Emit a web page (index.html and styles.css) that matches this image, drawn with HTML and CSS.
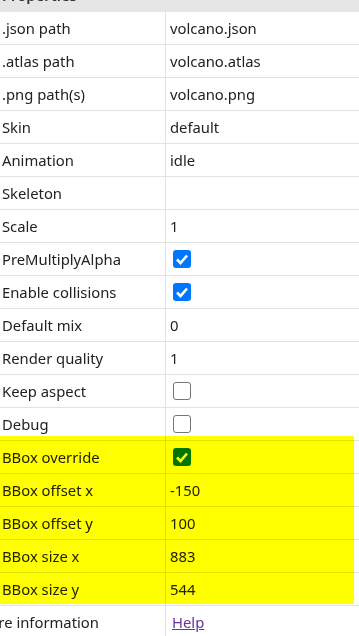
FILE: index.html
```html
<!DOCTYPE html>
<html lang="en">
<head>
  <meta charset="UTF-8" />
  <title>Properties</title>
  <link rel="stylesheet" href="styles.css">
</head>
<body>
  <div class="panel">
    <div class="props-head">Properties</div>

    <div class="row"><div class="key">.json path</div><div class="val">volcano.json</div></div>
    <div class="row"><div class="key">.atlas path</div><div class="val">volcano.atlas</div></div>
    <div class="row"><div class="key">.png path(s)</div><div class="val">volcano.png</div></div>
    <div class="row"><div class="key">Skin</div><div class="val">default</div></div>
    <div class="row"><div class="key">Animation</div><div class="val">idle</div></div>
    <div class="row"><div class="key">Skeleton</div><div class="val"></div></div>
    <div class="row"><div class="key">Scale</div><div class="val">1</div></div>
    <div class="row"><div class="key">PreMultiplyAlpha</div><div class="val"><span class="check on"></span></div></div>
    <div class="row"><div class="key">Enable collisions</div><div class="val"><span class="check on"></span></div></div>
    <div class="row"><div class="key">Default mix</div><div class="val">0</div></div>
    <div class="row"><div class="key">Render quality</div><div class="val">1</div></div>
    <div class="row"><div class="key">Keep aspect</div><div class="val"><span class="check"></span></div></div>
    <div class="row"><div class="key">Debug</div><div class="val"><span class="check"></span></div></div>
    <div class="row"><div class="key">BBox override</div><div class="val"><span class="check on"></span></div></div>
    <div class="row"><div class="key">BBox offset x</div><div class="val">-150</div></div>
    <div class="row"><div class="key">BBox offset y</div><div class="val">100</div></div>
    <div class="row"><div class="key">BBox size x</div><div class="val">883</div></div>
    <div class="row"><div class="key">BBox size y</div><div class="val">544</div></div>
    <div class="row"><div class="key more">More information</div><div class="val"><a href="#" class="help">Help</a></div></div>

    <!-- highlighted group (BBox rows) -->
    <div class="highlight"></div>
  </div>
</body>
</html>
```

FILE: styles.css
```css
html, body {
  margin: 0;
  padding: 0;
  overflow: hidden;
  background: #fff;
}

body {
  font-family: "Noto Sans", "Open Sans", sans-serif;
  font-size: 14.8px;
  color: #222;
  width: 359px;
  height: 636px;
}

.panel {
  position: relative;
  margin-top: -21px;
}

.props-head {
  height: 33px;
  line-height: 33px;
  background-color: #e6e6e6;
  padding-left: 2px;
  font-weight: 600;
  color: #333;
}

.row {
  display: flex;
  height: 33px;
  box-sizing: border-box;
  border-bottom: 1px solid #e2e2e2;
}

.key {
  width: 166px;
  box-sizing: border-box;
  border-right: 1px solid #e2e2e2;
  padding-left: 2px;
  display: flex;
  align-items: center;
  white-space: nowrap;
  overflow: hidden;
}

.key.more {
  text-indent: -26px;
}

.val {
  flex: 1;
  padding-left: 4px;
  display: flex;
  align-items: center;
}

.help {
  color: #6a2fa0;
  text-decoration: underline;
  margin-left: 2px;
}

/* checkboxes */
.check {
  width: 16px;
  height: 16px;
  margin-left: 3px;
  border: 1px solid #767676;
  border-radius: 3px;
  background: #fff;
}

.check.on {
  width: 18px;
  height: 18px;
  border: none;
  background-color: #0075ff;
  background-image: url("data:image/svg+xml;utf8,<svg xmlns='http://www.w3.org/2000/svg' viewBox='0 0 18 18'><path d='M4 9.5 L7.5 13 L14 5.5' fill='none' stroke='white' stroke-width='2.6'/></svg>");
}

/* yellow marker over the bbox rows */
.highlight {
  position: absolute;
  left: 0;
  top: 457px;
  width: 354px;
  height: 168px;
  background: #ffff00;
  mix-blend-mode: multiply;
  pointer-events: none;
}
```
